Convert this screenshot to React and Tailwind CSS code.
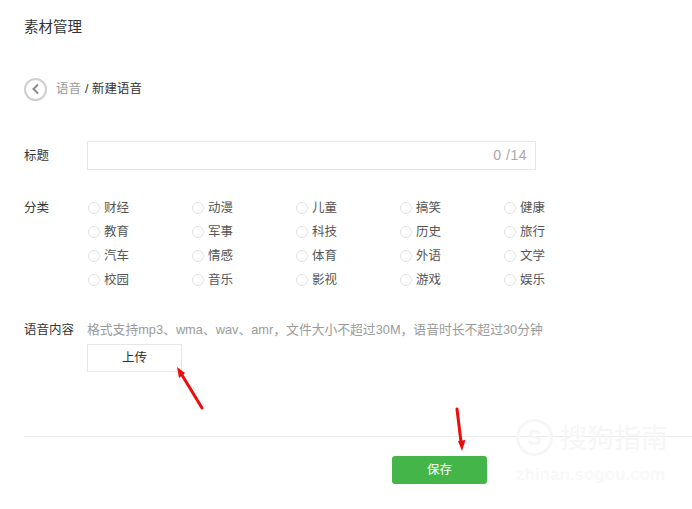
import React from 'react'

const font = { fontFamily: '"Liberation Sans", "Noto Sans CJK SC", sans-serif' }

const categories = [
  '财经', '动漫', '儿童', '搞笑', '健康',
  '教育', '军事', '科技', '历史', '旅行',
  '汽车', '情感', '体育', '外语', '文学',
  '校园', '音乐', '影视', '游戏', '娱乐',
]

function RedArrow({ className, x1, y1, x2, y2, hx }) {
  return (
    <svg className={className} viewBox="0 0 40 60" fill="none">
      <line x1={x1} y1={y1} x2={x2} y2={y2} stroke="#ee0c0c" strokeWidth="3" strokeLinecap="round" />
      <polygon points={hx} fill="#ee0c0c" />
    </svg>
  )
}

export default function App() {
  return (
    <div className="relative w-[692px] h-[509px] overflow-hidden bg-white text-[12.5px] text-[#353535]" style={font}>
      <div className="pl-6 pt-[18px]">
        <h1 className="text-[14.5px] leading-[18px] font-normal text-[#333]">素材管理</h1>

        <div className="mt-[41px] flex items-center h-[24px]">
          <span className="flex items-center justify-center w-[23px] h-[23px] rounded-full border-2 border-[#cfcfcf]">
            <svg width="10" height="12" viewBox="0 0 10 12" fill="none">
              <path d="M7 1.5 2.5 6 7 10.5" stroke="#8a8a8a" strokeWidth="2" />
            </svg>
          </span>
          <span className="ml-[9px] text-[#9a9a9a]">语音</span>
          <span className="ml-[4px] text-[#333]">/ 新建语音</span>
        </div>

        <div className="mt-[40px] flex items-center">
          <label className="w-[63px] pt-[2px]">标题</label>
          <div className="w-[449px] h-[29px] border border-[#e7e7eb] flex items-center justify-end pr-[8px] text-[14px] tracking-[0.5px] text-[#a8a8a8]">0 /14</div>
        </div>

        <div className="mt-[26px] flex items-start">
          <label className="w-[63px] leading-[24px]">分类</label>
          <div className="grid grid-cols-[repeat(5,104px)] auto-rows-[24px]">
            {categories.map((name) => (
              <div key={name} className="flex items-center text-[#555]">
                <span className="ml-[1px] w-[12px] h-[12px] rounded-full border border-[#e2e2e2]" />
                <span className="ml-[4px]">{name}</span>
              </div>
            ))}
          </div>
        </div>

        <div className="mt-[28px] flex items-center h-[20px]">
          <label className="w-[63px]">语音内容</label>
          <span className="text-[12.8px] text-[#9a9a9a] whitespace-nowrap">格式支持mp3、wma、wav、amr，文件大小不超过30M，语音时长不超过30分钟</span>
        </div>

        <button className="block ml-[63px] mt-[4px] w-[95px] h-[28px] border border-[#e7e7eb] bg-white text-[#333]">上传</button>

        <div className="mt-[64px] border-t border-[#ececec]" />

        <button className="block ml-[368px] mt-[19px] w-[95px] h-[28px] rounded-[3px] bg-[#44b549] text-white">保存</button>
      </div>

      {/* red annotation arrows */}
      <RedArrow className="absolute left-[170px] top-[360px] w-[40px] h-[60px]" x1="32" y1="48" x2="12" y2="15" hx="7,7 15,13 9,18" />
      <RedArrow className="absolute left-[440px] top-[400px] w-[40px] h-[60px]" x1="17" y1="9" x2="21" y2="42" hx="22,51 18,41 25.5,40" />

      {/* watermark */}
      <div className="absolute left-[516px] top-[419px] w-[37px] h-[37px] rounded-full border-[3px] border-[#f6f6f6] flex items-center justify-center text-[22px] font-bold text-[#f6f6f6]">S</div>
      <div className="absolute left-[560px] top-[423px] text-[27px] leading-[32px] whitespace-nowrap text-[#f6f6f6]">搜狗指南</div>
      <div className="absolute left-[516px] top-[465px] text-[17px] leading-[20px] whitespace-nowrap font-bold text-[#f8f8f8]">zhinan.sogou.com</div>
    </div>
  )
}
